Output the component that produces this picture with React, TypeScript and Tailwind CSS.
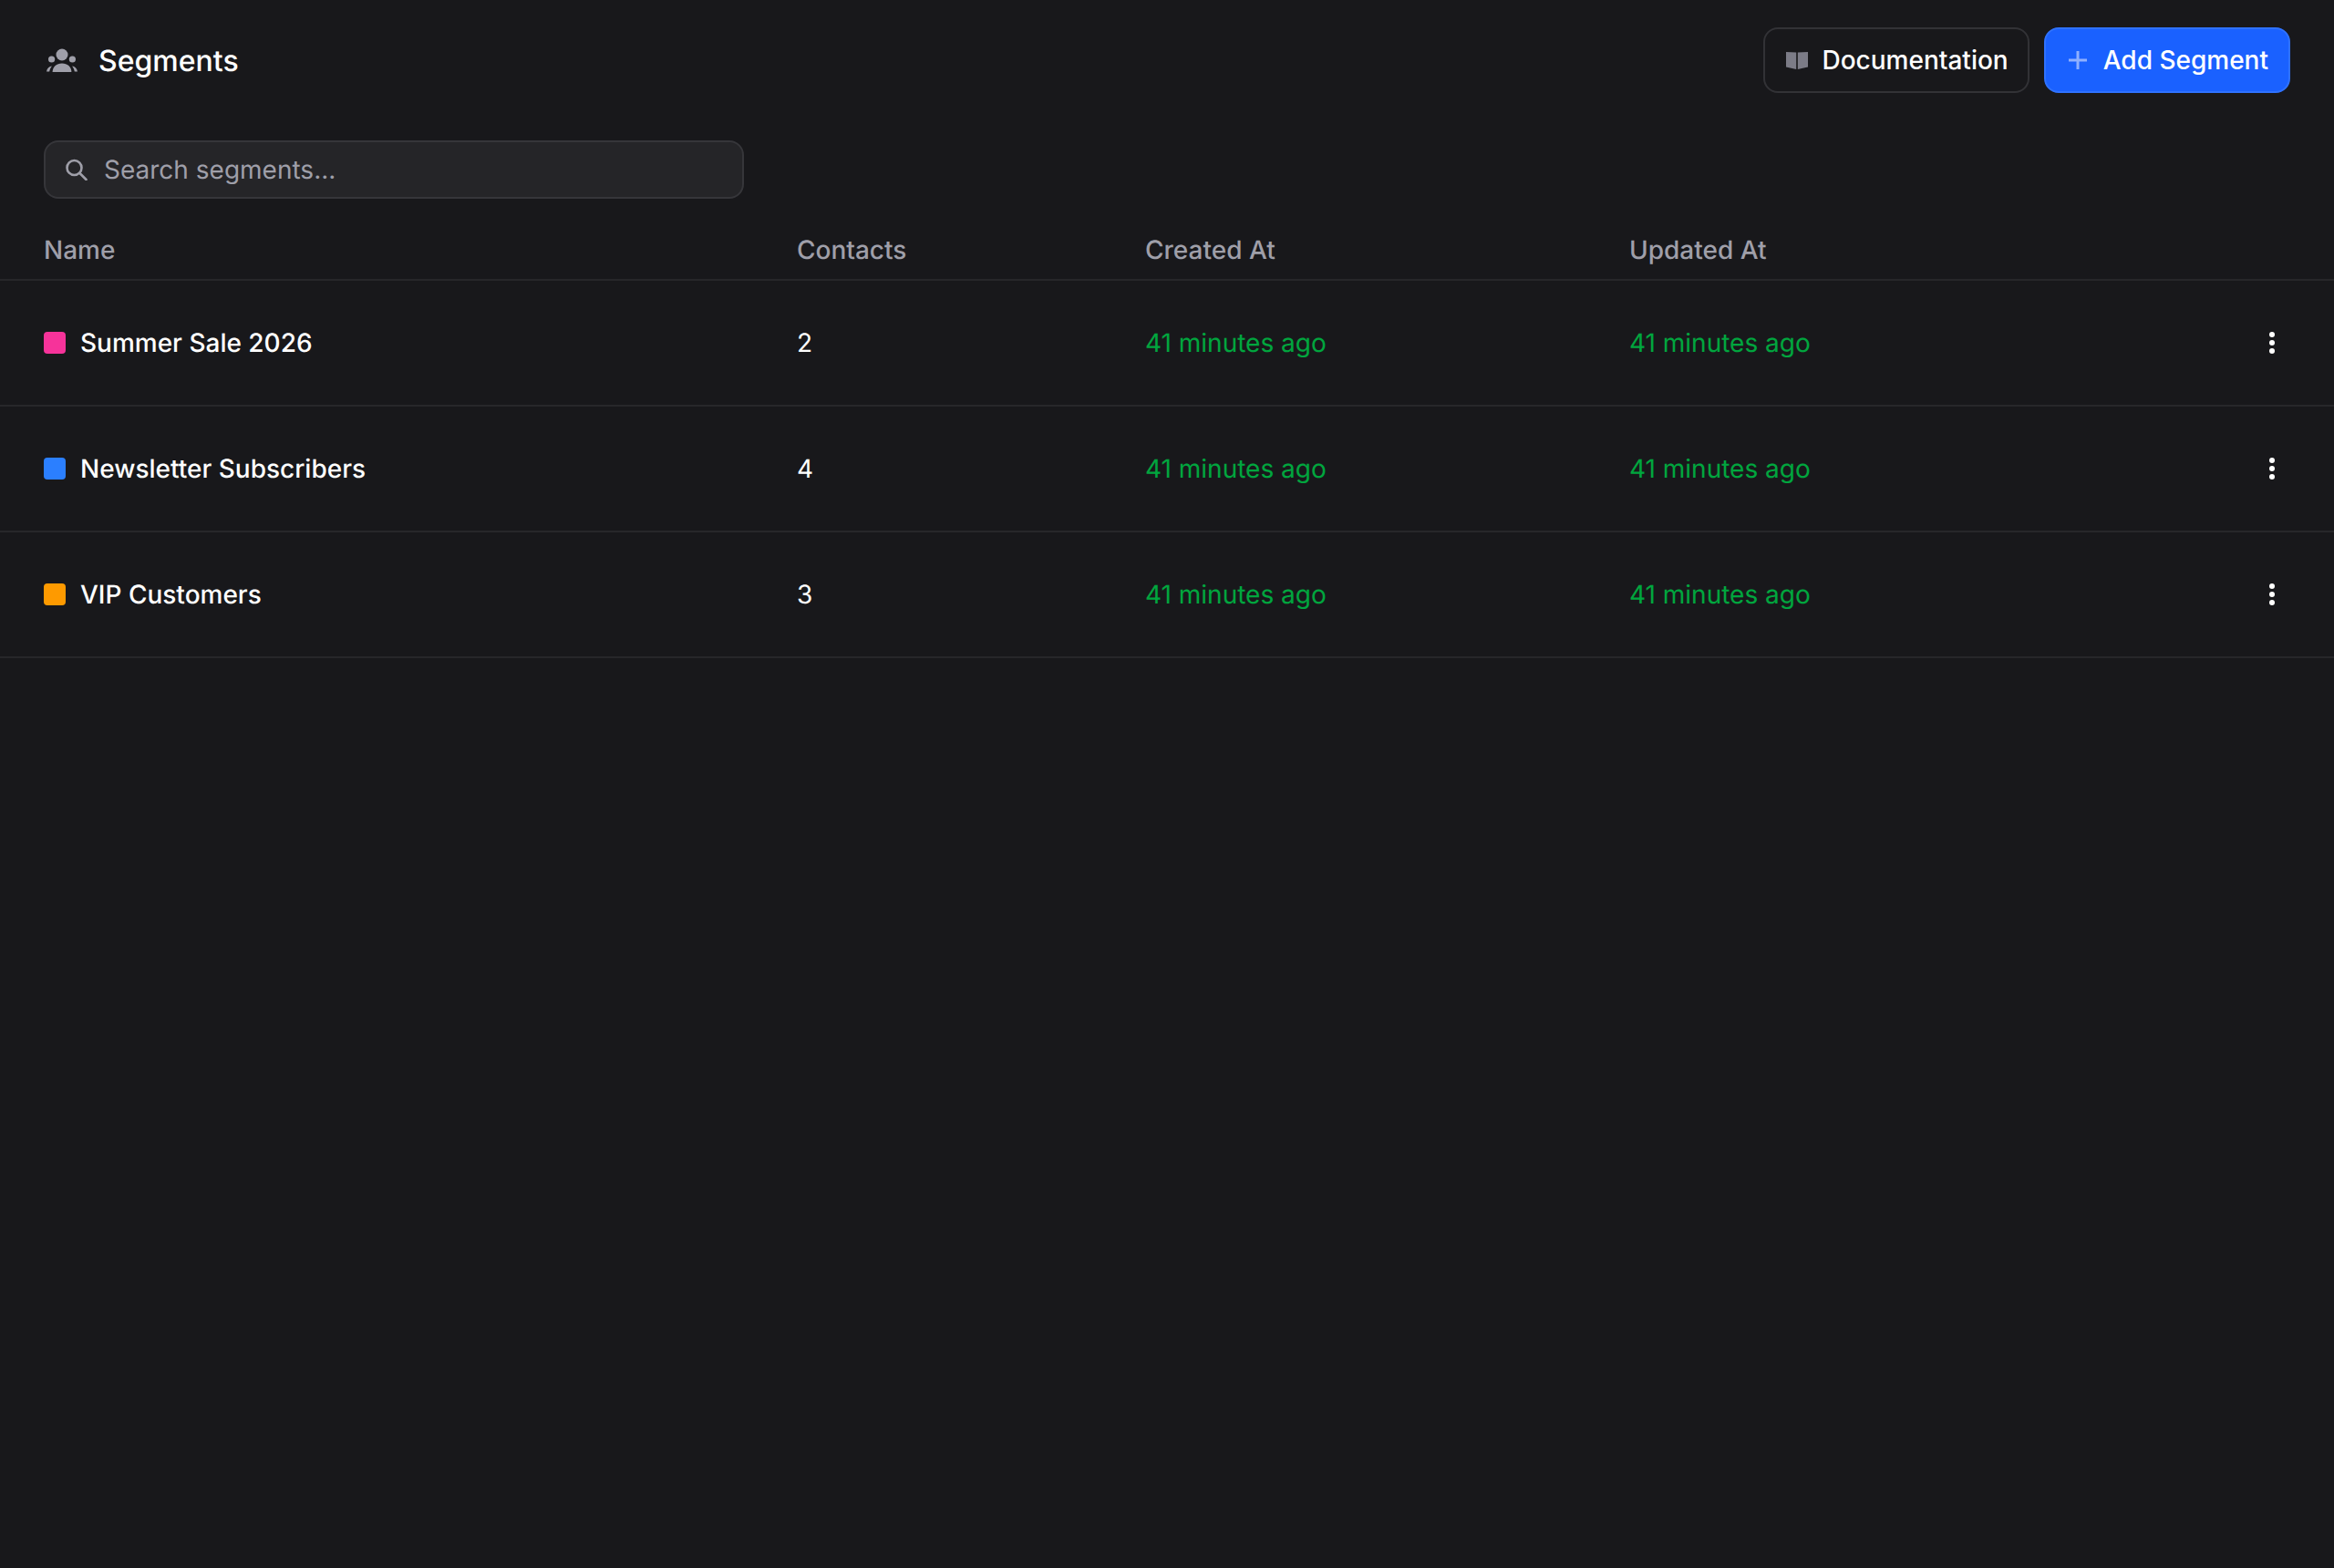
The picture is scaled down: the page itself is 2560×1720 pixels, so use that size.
import React from "react";

const rows = [
  { name: "Summer Sale 2026", color: "bg-pink-500", count: 2 },
  { name: "Newsletter Subscribers", color: "bg-blue-500", count: 4 },
  { name: "VIP Customers", color: "bg-amber-500", count: 3 },
];

const cols = "grid grid-cols-[826px_382px_531px_1fr_68px] items-center pl-[48px] pr-[34px]";

function People() {
  return (
    <svg width="36" height="28" viewBox="0 0 36 28" className="fill-zinc-400" aria-hidden="true">
      <circle cx="18" cy="8" r="6.5" />
      <circle cx="6.600" cy="13" r="3.6" />
      <circle cx="29.400" cy="13" r="3.6" />
      <path d="M7.600 27c0-6 4.600-9.600 10.400-9.600S28.400 21 28.400 27z" />
      <path d="M1 26.500c.6-3.600 3-5.800 6-6-1.400 1.600-2.300 3.500-2.800 6z" />
      <path d="M35 26.500c-.6-3.600-3-5.800-6-6 1.400 1.600 2.300 3.500 2.800 6z" />
    </svg>
  );
}

function Book() {
  return (
    <svg width="24" height="20" viewBox="0 0 24 20" className="fill-[#7c7c87]" aria-hidden="true">
      <path d="M0 1l11.200.5V20L0 17.600z" />
      <path d="M24 1l-11.200.5V20L24 17.600z" />
    </svg>
  );
}

function PlusIcon() {
  return (
    <svg width="24" height="24" viewBox="0 0 24 24" fill="none" className="stroke-[#8fb0ff]" strokeWidth="3" aria-hidden="true">
      <path d="M2 12h20M12 2v20" />
    </svg>
  );
}

function SearchIcon() {
  return (
    <svg width="24" height="24" viewBox="0 0 24 24" fill="none" className="stroke-zinc-400" strokeWidth="2.600" strokeLinecap="round" aria-hidden="true">
      <circle cx="9.500" cy="10" r="8" />
      <path d="M15.500 16l7 7" />
    </svg>
  );
}

export default function App() {
  return (
    <div className="min-h-[1720px] bg-zinc-900 font-['Inter',sans-serif] text-[28px] leading-[40px] text-white [text-rendering:geometricPrecision]">
      <header className="flex h-[132px] items-center justify-between pl-[50px] pr-[48px]">
        <div className="flex items-center gap-[22px]">
          <People />
          <h1 className="mt-[2px] text-[32px] font-medium leading-[48px]">Segments</h1>
        </div>
        <div className="flex items-center gap-[16px]">
          <button className="flex h-[72px] items-center gap-[16px] rounded-[16px] border-2 border-[#323236] pl-[23px] pr-[21px] font-medium">
            <Book />
            Documentation
          </button>
          <button className="flex h-[72px] items-center gap-[16px] rounded-[16px] border-2 border-[#2f72ff] bg-[#1a61ff] pl-[23px] pr-[22px] font-medium">
            <PlusIcon />
            Add Segment
          </button>
        </div>
      </header>

      <div className="pl-[48px] pt-[22px]">
        <label className="flex h-[64px] w-[768px] items-center gap-[18px] rounded-[16px] border-2 border-[#36363a] bg-[#252528] pl-[22px]">
          <SearchIcon />
          <span className="text-zinc-400">Search segments...</span>
        </label>
      </div>

      <div className={`${cols} h-[90px] border-b-2 border-zinc-800 pt-[24px] font-medium text-zinc-400`}>
        <span>Name</span>
        <span>Contacts</span>
        <span>Created At</span>
        <span>Updated At</span>
        <span />
      </div>

      {rows.map((r) => (
        <div key={r.name} className={`${cols} h-[138px] border-b-2 border-zinc-800`}>
          <div className="flex items-center gap-[16px] font-medium">
            <span className={`h-[24px] w-[24px] rounded-[4px] ${r.color}`} />
            {r.name}
          </div>
          <span>{r.count}</span>
          <span className="text-green-600">41 minutes ago</span>
          <span className="text-green-600">41 minutes ago</span>
          <div className="flex flex-col items-center gap-[3px]">
            <span className="h-[6px] w-[6px] rounded-full bg-white" />
            <span className="h-[6px] w-[6px] rounded-full bg-white" />
            <span className="h-[6px] w-[6px] rounded-full bg-white" />
          </div>
        </div>
      ))}
    </div>
  );
}
